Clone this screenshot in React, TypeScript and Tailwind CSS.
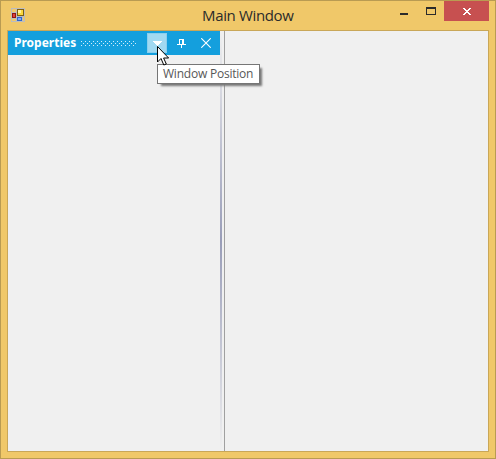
import React from "react";

function AppIcon() {
  return (
    <svg width="14" height="14" viewBox="0 0 14 14" shapeRendering="crispEdges">
      <path d="M0 0h14v14H0z M1 1v12h12V1z" fillRule="evenodd" fill="#bcbcbe" />
      <path d="M5 1h1v12H5z M1 4h4v1H1z M1 10h4v1H1z M6 8h7v1H6z M11 9h1v4h-1z" fill="#bcbcbe" />
      <rect x="6" y="1" width="7" height="7" fill="#7d5f12" />
      <rect x="7" y="2" width="5" height="5" fill="#fad73c" />
      <rect x="7" y="2" width="3" height="3" fill="#fff0a0" />
      <rect x="1" y="5" width="4" height="5" fill="#8d1616" />
      <rect x="2" y="6" width="2" height="3" fill="#e0403c" />
      <rect x="6" y="9" width="5" height="4" fill="#2f66cf" />
      <rect x="7" y="10" width="3" height="2" fill="#7fa9f3" />
    </svg>
  );
}

function Grip() {
  return (
    <svg width="55" height="5" viewBox="0 0 55 5" shapeRendering="crispEdges" className="ml-[4px]">
      <defs>
        <pattern id="dots" width="4" height="4" patternUnits="userSpaceOnUse">
          <rect width="1" height="1" fill="#d3eefa" />
          <rect x="2" y="2" width="1" height="1" fill="#d3eefa" />
        </pattern>
      </defs>
      <rect width="55" height="5" fill="url(#dots)" />
    </svg>
  );
}

export default function App() {
  return (
    <div className="relative flex h-[459px] w-[496px] flex-col overflow-hidden border border-[#b99b52] bg-[#f0c869] px-[6px] pb-[6px]">
      <header className="-mr-[6px] flex h-[29px] shrink-0 items-start">
        <div className="ml-[4px] mt-[7px]"><AppIcon /></div>
        <h1 className="ml-[177px] mt-[3px] w-[100px] whitespace-nowrap font-['Open_Sans','Noto_Sans',sans-serif] text-[15px] leading-[22px] tracking-[-0.35px] text-[#2b2b2b]">Main Window</h1>
        <div className="ml-auto flex">
          <svg width="54" height="20" viewBox="0 0 54 20" shapeRendering="crispEdges">
            <rect x="10" y="12" width="8" height="2" fill="#2b2b2b" />
            <path d="M36 6h10v8h-10z M37 8v5h8v-5z" fillRule="evenodd" fill="#2b2b2b" />
          </svg>
          <div className="mr-[6px] h-[20px] w-[45px] bg-[#c75050]">
            <svg width="45" height="20" viewBox="0 0 45 20" shapeRendering="crispEdges">
              <path d="M19 7h2v1h1v1h2v-1h1v-1h2v1h-1v1h-1v1h-1v1h1v1h1v1h1v1h-2v-1h-1v-1h-2v1h-1v1h-2v-1h1v-1h1v-1h1v-1h-1v-1h-1v-1h-1z" fill="#fff" />
            </svg>
          </div>
        </div>
      </header>
      <main className="flex grow border border-[#c9a758] bg-[#f0f0f0]">
        <aside className="w-[212px]">
          <div className="flex h-[24px] items-center bg-[#149fdd] pl-[6px]">
            <h2 className="w-[63px] whitespace-nowrap font-['Noto_Sans','Open_Sans',sans-serif] text-[12px] font-bold leading-[24px] text-white">Properties</h2>
            <Grip />
            <button className="ml-[11px] flex h-[20px] w-[20px] items-center justify-center border border-[#8acfee] bg-[#a1d9f1]">
              <svg width="9" height="5" viewBox="0 0 9 5" shapeRendering="crispEdges"><path d="M0 0h9v1H8v1H7v1H6v1H5v1H4V4H3V3H2V2H1V1H0z" fill="#fff" /></svg>
            </button>
            <svg width="9" height="9" viewBox="0 0 9 9" shapeRendering="crispEdges" className="ml-[10px]">
              <path d="M2 0h5v5h2v1H5v3H4V6H0V5h2z M3 1v4h2V1z" fillRule="evenodd" fill="#fff" />
            </svg>
            <svg width="10" height="10" viewBox="0 0 10 10" className="ml-[15px]">
              <path d="M.25 .25l9.500 9.500M9.750 .25l-9.500 9.500" stroke="#fff" strokeWidth="1.1" />
            </svg>
          </div>
        </aside>
        <div className="flex w-[5px] justify-between border-r border-[#a0a0a0]">
          <div className="w-[2px] bg-gradient-to-b from-[#f0f0f0] via-[#999db8] to-[#f0f0f0]" />
        </div>
        <section className="grow" />
      </main>
      <div role="tooltip" className="absolute left-[156px] top-[63px] flex h-[20px] w-[103px] items-center border border-[#767676] bg-white pl-[5px] font-['Open_Sans','Noto_Sans',sans-serif] text-[12px] tracking-[-0.22px] text-[#575757] shadow-[3px_3px_2px_-1px_#777]">
        <span className="whitespace-nowrap">Window Position</span>
      </div>
      <svg className="absolute left-[156px] top-[45px]" width="13" height="20" viewBox="0 0 13 20">
        <path d="M.5 .5v15.500l3.500-3.500 2.800 6.500 2.500-1-2.700-6h5z" fill="#fff" stroke="#000" />
      </svg>
    </div>
  );
}
